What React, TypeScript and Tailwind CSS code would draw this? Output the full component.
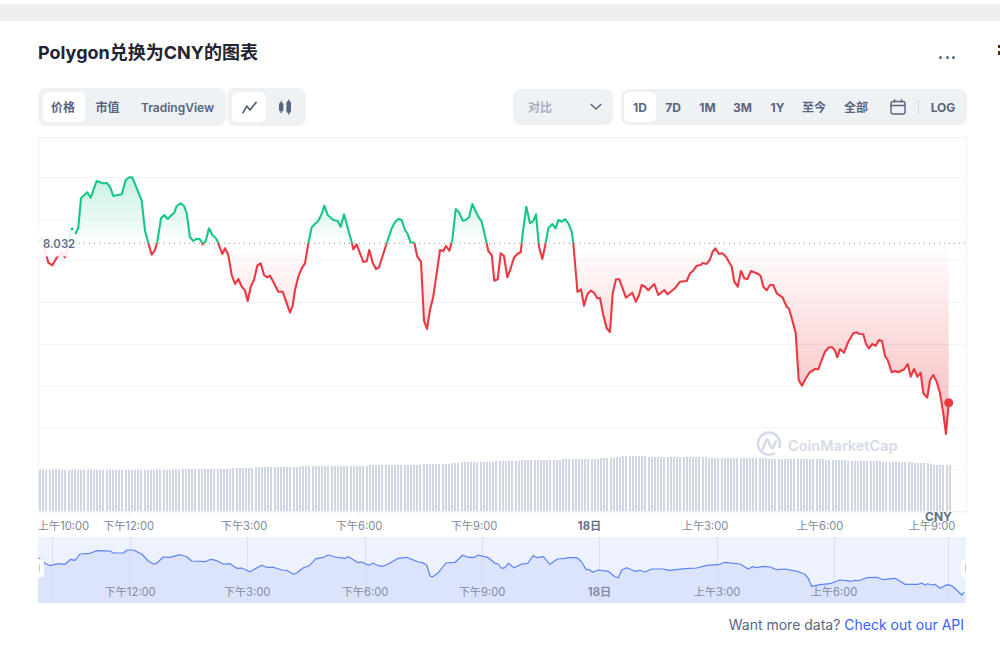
const linePts: [number, number][] = [
  [38, 243], [42, 237], [46.7, 256], [48.3, 262.7], [52.3, 265.3], [57.3, 256.7], [61.7, 252.7], [65, 257.3], [67.3, 250],
  [70.7, 231.7], [72, 228.3], [73.3, 231.7], [75.7, 233.3], [78.3, 227.7], [81, 198.3], [87.3, 192.3], [90.7, 197.7],
  [96.7, 181], [102.7, 183.3], [106.7, 183], [110, 186.7], [113.3, 196], [121.7, 194.3], [125.7, 180], [129.3, 177.3],
  [132.3, 177.3], [141.7, 200.7], [145, 230.7], [148.3, 243.3], [151.7, 254.7], [155, 250], [157.3, 241.7], [161, 218.3],
  [164.3, 215], [167.7, 219], [171.7, 215], [174.3, 212.7], [176.7, 206], [180.7, 203.3], [184, 206], [186.7, 213.3],
  [190, 237.3], [193.3, 241], [196.7, 238.7], [200, 239.3], [202.7, 244.3], [205.7, 241], [209, 228.3], [212.3, 235],
  [216, 238.3], [218.3, 243.3], [222.3, 254], [225, 248.3], [228.3, 255], [231.7, 275], [235, 284], [238.3, 279],
  [241.7, 286.7], [245, 290.7], [247.7, 301], [251, 286], [254, 280], [257.3, 265.7], [260.7, 263.3], [264, 275],
  [267.3, 277.3], [270, 275.7], [273.3, 281.7], [278.3, 291.7], [282.7, 291.7], [286.7, 303.3], [290, 312.5],
  [292.7, 305.7], [295, 290], [298.3, 276.7], [301.7, 268.3], [305, 263.3], [308.3, 243.3], [311.7, 227.3], [318.3, 220.7],
  [321.7, 214], [324.3, 205.7], [327.7, 215], [333.3, 220], [337.7, 221], [340.7, 226.7], [344, 214.3], [348.3, 230],
  [352, 243.3], [353.3, 249.3], [356.7, 244.3], [360, 253.3], [363.3, 262], [366.7, 261.3], [369.3, 250], [372.7, 262.7],
  [376, 269], [379, 267.3], [386.7, 243.3], [391.7, 228.3], [395, 222.3], [398.3, 219], [401.7, 220], [405, 230],
  [407.3, 233.3], [410.7, 242.3], [414.3, 242.7], [417.3, 256.7], [421, 261.7], [424, 320.7], [427, 329], [430, 310],
  [433.3, 296.7], [436.7, 273.3], [440, 250], [443.3, 251], [446, 246], [449.3, 250.7], [452.3, 240], [455.7, 209],
  [459, 212.3], [462.7, 220.7], [465.7, 220], [469, 217.3], [472.3, 204], [478.3, 216.7], [481.7, 221.7], [486.7, 243.3],
  [488.3, 251], [491.7, 255], [494.3, 280.7], [497.7, 279.3], [500.7, 253.3], [504, 256], [507.3, 277.3], [510.7, 268.3],
  [514, 257.7], [517.3, 254], [520.7, 252.3], [522.7, 233.3], [526.3, 206.7], [530, 223.3], [533.3, 221], [536, 214.3],
  [539, 246.7], [542.3, 259], [545.7, 243.3], [548.3, 228.3], [552.3, 224], [555.7, 228.3], [558.3, 220], [561.7, 221.7],
  [565, 219], [568.3, 223.3], [571.7, 231.7], [573.3, 243.3], [577.5, 292], [581, 289.3], [584, 305.7], [587.5, 294],
  [590.7, 290.7], [594, 292.7], [597.3, 298.3], [600, 298], [603.3, 315], [606.7, 328.3], [610, 332], [612.7, 293.3],
  [616, 279.3], [619.3, 279.3], [626, 297.7], [632.3, 292.7], [635.7, 301.7], [639, 295], [641.7, 285], [645, 286.7],
  [648.3, 290.3], [654.3, 284], [658.3, 295], [664.3, 290], [667.7, 294.3], [675, 288.3], [680, 281.7], [686.7, 281],
  [690, 273.3], [693.3, 270.7], [696.7, 265.7], [700.7, 265], [702.7, 263], [706.7, 264], [710, 259.3], [712.7, 251.7],
  [715.3, 248.3], [719, 254], [722.3, 253.3], [726, 256.7], [731.7, 266.7], [734.3, 281.7], [737.7, 286.7], [741, 271],
  [744.3, 278.3], [747.3, 279.3], [751, 271], [757.7, 273.7], [760.7, 276], [763.3, 286.7], [766.7, 290.3], [770, 285],
  [773.3, 285], [776.7, 293.3], [782.7, 297.7], [786.7, 306.7], [789, 308.7], [792.7, 321.7], [795.7, 333.3], [798.7, 380],
  [802, 385.7], [805, 380], [809.3, 372.7], [815, 369], [818.3, 369.3], [821.7, 360], [825, 351.7], [829, 347.3],
  [832.3, 347.3], [835, 350.7], [837.3, 357.3], [840, 349], [844, 352.7], [848.3, 341.7], [853.3, 333.3], [856.7, 332.3],
  [859.3, 334], [863.3, 334.3], [866, 344], [869, 348.3], [872.3, 344], [875.7, 345.7], [879, 340], [882, 341], [885, 356],
  [887.7, 360], [891.7, 372.3], [895, 371], [898.3, 372.3], [904.3, 369.3], [907.7, 364], [910.7, 376.7], [914, 369],
  [917.3, 376.7], [920.7, 372.7], [923.3, 393.3], [927.3, 397.7], [930, 380], [933.3, 375], [936.7, 381.7], [940, 393.3],
  [943.3, 413.3], [946, 434], [948.7, 402.7],
];

const navPts: [number, number][] = [
  [38, 558], [40, 559], [45, 563.3], [50, 565.7], [58.3, 563.7], [65, 564.3], [70.7, 559.3], [75, 560.3], [80, 554], [90, 553.3],
  [96.7, 550.7], [110, 551], [113.3, 553], [123.3, 553], [127.3, 550], [133.3, 550], [141.7, 554], [148.3, 561], [153.3, 564],
  [156.7, 563.3], [163.3, 557], [170, 557.3], [180, 554.7], [186.7, 556.7], [191.7, 561], [205, 561.7], [211, 559.3],
  [216.7, 560.7], [223.3, 564], [230, 563.7], [236.7, 568.3], [241.7, 568], [250, 571.7], [261.7, 565.3], [266.7, 567.3],
  [273.3, 567.3], [281.7, 570], [286.7, 570.3], [293.3, 574.3], [296.7, 573], [303.3, 567.7], [309.3, 565.7], [316, 558.7],
  [323.3, 557.3], [328.3, 555], [335, 557], [345, 558.3], [348.3, 556.7], [358.3, 562.7], [361.7, 562], [368.3, 565.3],
  [373.3, 563.3], [378.3, 565.7], [382.7, 566.3], [388.3, 564], [398.3, 558.3], [406.7, 557.3], [418.3, 562], [421.7, 562.3],
  [426.7, 565], [430, 575.7], [432.3, 577], [438.3, 572.7], [446, 563], [455, 562.3], [462.7, 555.3], [468.3, 557.3],
  [475, 557.3], [478.3, 555], [488.3, 557.7], [495, 563.3], [498.3, 564], [501.7, 568.3], [505, 567.7], [508.3, 563.3],
  [514, 567.7], [521.7, 564], [527.7, 563.3], [533.3, 555.7], [537.7, 557.7], [543.3, 556.7], [550, 564.3], [557.3, 559],
  [565, 558.3], [568.3, 557.7], [576.7, 557.7], [581, 561], [586, 569.3], [589.3, 569.7], [592.7, 572.3], [598.3, 570],
  [608.3, 571.3], [615, 576.7], [618.3, 577.7], [621.7, 570], [626.7, 567.7], [635, 571.3], [640, 570.3], [645, 572],
  [651.7, 569], [663.3, 569], [668.3, 570.3], [688.3, 568.3], [696.7, 568], [706.7, 565.3], [718.3, 564.7], [725, 562.3],
  [740, 564], [748.3, 569], [752.3, 566.7], [756.7, 567.7], [763.3, 566.3], [770, 567], [776.7, 569.7], [785, 569],
  [798.3, 571.7], [805, 574.3], [808.3, 578.3], [811.7, 586.3], [820, 584.7], [830, 583.7], [840, 580], [846.7, 580.7],
  [851.7, 581.3], [855, 580.3], [858.3, 580.7], [866.7, 577.7], [876.7, 577.3], [883.3, 579.7], [895, 578.3], [905, 584.3],
  [918.3, 584.3], [921.7, 583], [925, 585], [927.7, 583.7], [931.7, 585], [935, 584.3], [940, 588.3], [946.7, 584.7],
  [951.7, 585.7], [956.7, 590], [961.7, 595], [964.3, 592.3],
];

const volProfile: [number, number][] = [
  [39, 470], [180, 470], [183, 469], [228, 469], [231, 468], [252, 468], [255, 467], [300, 466.5], [360, 466], [372, 465],
  [420, 464.5], [445, 464], [460, 462.5], [490, 462], [500, 461], [520, 460.5], [560, 459.5], [600, 458.5], [615, 457.5],
  [622, 456.5], [640, 456], [650, 457], [700, 457], [712, 458], [760, 458], [772, 459], [820, 459], [830, 460], [860, 461],
  [900, 462], [925, 463], [934, 465], [951, 465],
];

const BASE = 243.3;
const toPath = (pts: [number, number][]) => pts.map(([x, y], i) => `${i ? "L" : "M"}${x} ${y}`).join(" ");

function volTop(x: number) {
  for (let i = 1; i < volProfile.length; i++) {
    const [x0, y0] = volProfile[i - 1];
    const [x1, y1] = volProfile[i];
    if (x <= x1) return y0 + ((y1 - y0) * (x - x0)) / (x1 - x0);
  }
  return 465;
}

const volBars = Array.from({ length: 288 }, (_, i) => {
  const x = 39 + i * 3.17;
  return { x: Math.round(x), y: Math.round(volTop(x)) };
});

const gridYs = [177.5, 219.5, 260.5, 302.5, 344.5, 386.5, 427.5, 469.5];
const tickXs = [51, 128, 244, 359, 474, 590, 705, 820, 935];

const axisLabels = [
  { x: 63.5, t: "上午10:00" },
  { x: 128.5, t: "下午12:00" },
  { x: 244, t: "下午3:00" },
  { x: 359, t: "下午6:00" },
  { x: 474, t: "下午9:00" },
  { x: 589.5, t: "18日", bold: true },
  { x: 705, t: "上午3:00" },
  { x: 820, t: "上午6:00" },
  { x: 932, t: "上午9:00" },
];

const navLabels = [
  { x: 130, t: "下午12:00" },
  { x: 247, t: "下午3:00" },
  { x: 365, t: "下午6:00" },
  { x: 482, t: "下午9:00" },
  { x: 599.5, t: "18日", bold: true },
  { x: 717, t: "上午3:00" },
  { x: 834, t: "上午6:00" },
];

const navGridXs = [52, 130, 247, 365, 482, 599, 717, 834, 948];

const ranges = [
  { label: "7D", w: "w-[34px]" },
  { label: "1M", w: "w-[35px]" },
  { label: "3M", w: "w-[35px]" },
  { label: "1Y", w: "w-[35px]" },
  { label: "至今", w: "w-[38px]" },
  { label: "全部", w: "w-[46px]" },
];

function PriceChart() {
  const line = toPath(linePts);
  const area = `${line} L948.7 ${BASE} L38 ${BASE} Z`;
  return (
    <svg className="block w-[932px] h-[400px] mt-[11px]" viewBox="38 137 932 400">
      <defs>
        <linearGradient id="upFill" gradientUnits="userSpaceOnUse" x1="0" y1="177" x2="0" y2="243">
          <stop offset="0" stopColor="#16c784" stopOpacity="0.24" />
          <stop offset="1" stopColor="#16c784" stopOpacity="0.01" />
        </linearGradient>
        <linearGradient id="downFill" gradientUnits="userSpaceOnUse" x1="0" y1="243" x2="0" y2="434">
          <stop offset="0" stopColor="#ea3943" stopOpacity="0" />
          <stop offset="1" stopColor="#ea3943" stopOpacity="0.36" />
        </linearGradient>
        <clipPath id="above">
          <rect x="38" y="137" width="932" height={BASE - 137} />
        </clipPath>
        <clipPath id="below">
          <rect x="38" y={BASE} width="932" height="300" />
        </clipPath>
      </defs>

      {gridYs.map(y => (
        <line key={y} x1="38" x2="967" y1={y} y2={y} stroke="#f3f5f8" strokeWidth="1" />
      ))}
      <path d="M38.5 512 V137.5 H966.5 V512" fill="none" stroke="#eff2f5" strokeWidth="1" />

      <g clipPath="url(#above)">
        <path d={area} fill="url(#upFill)" />
      </g>
      <g clipPath="url(#below)">
        <path d={area} fill="url(#downFill)" />
      </g>

      <line x1="74" x2="967" y1={BASE} y2={BASE} stroke="#8a93a6" strokeWidth="1" strokeDasharray="1 4" />

      <g clipPath="url(#above)">
        <path d={line} fill="none" stroke="#16c784" strokeWidth="2.1" strokeLinejoin="round" />
      </g>
      <g clipPath="url(#below)">
        <path d={line} fill="none" stroke="#ea3943" strokeWidth="2.1" strokeLinejoin="round" />
      </g>
      <circle cx="948.7" cy="402.7" r="4.5" fill="#ea3943" />

      <rect x="38" y="230" width="37" height="26.5" fill="#ffffff" fillOpacity="0.88" />
      <text x="43" y="247.5" fontSize="11.4" fontWeight="600" fill="#616e85">8.032</text>

      <g stroke="#d5dbe7" strokeWidth="2.6" fill="none" strokeLinecap="round" strokeLinejoin="round">
        <path d="M779.4 447 A11 11 0 1 0 774 453.4" />
        <path d="M762.5 449.5 L766 440.5 Q767.2 438.5 768.3 440.5 L770.8 447 Q772 449 773.2 447 L775.8 441.5" />
      </g>
      <text x="788" y="451" fontSize="14.5" fontWeight="600" fill="#d5dbe7">CoinMarketCap</text>

      {volBars.map(b => (
        <rect key={b.x} x={b.x} y={b.y} width="2" height={511 - b.y} fill="#cfd6e4" />
      ))}
      <rect x="38" y="511" width="929" height="1.5" fill="#eff2f5" />
      {tickXs.map(x => (
        <rect key={x} x={x} y="512" width="1" height="3" fill="#eff2f5" />
      ))}

      {axisLabels.map(l => (
        <text
          key={l.t}
          x={l.x}
          y="530"
          fontSize="11.2"
          textAnchor="middle"
          fontWeight={l.bold ? 700 : 400}
          fill={l.bold ? "#616e85" : "#808a9d"}
        >
          {l.t}
        </text>
      ))}
      <text x="925" y="521" fontSize="12" fontWeight="700" fill="#616e85">CNY</text>
    </svg>
  );
}

function Navigator() {
  const line = toPath(navPts);
  return (
    <svg className="block w-[929px] h-[66px]" viewBox="38 537 929 66">
      <rect x="38" y="537" width="928" height="66" fill="#eef2fe" />
      <path d={`${line} L964.3 603 L38 603 Z`} fill="#dbe3fd" />
      {navGridXs.map(x => (
        <line key={x} x1={x + 0.5} x2={x + 0.5} y1="537" y2="603" stroke="#d8dff5" strokeWidth="1" />
      ))}
      <path d={line} fill="none" stroke="#5b82f7" strokeWidth="1.2" strokeLinejoin="round" />
      {navLabels.map(l => (
        <text
          key={l.t}
          x={l.x}
          y="596"
          fontSize="11.2"
          textAnchor="middle"
          fontWeight={l.bold ? 700 : 400}
          fill="#858ca2"
        >
          {l.t}
        </text>
      ))}
      <rect x="32" y="559" width="12" height="18.5" rx="4" fill="#ffffff" />
      <rect x="39" y="564" width="1" height="8" fill="#c3cad8" />
      <rect x="961" y="559" width="12" height="18.5" rx="4" fill="#ffffff" />
      <rect x="965" y="564" width="1" height="8" fill="#c3cad8" />
    </svg>
  );
}

export default function App() {
  return (
    <div className="relative w-[1000px] h-[650px] overflow-hidden bg-white pt-1 text-[#58667e] [font-family:Inter,'Noto_Sans_CJK_SC',sans-serif]">
      <div className="h-[17px] bg-[#efefef]" />

      <div className="absolute right-0 top-[45px] flex w-[2px] flex-col gap-[3px]">
        <span className="h-[3px] bg-[#4a2c0a]" />
        <span className="h-1 bg-[#4a2c0a]" />
      </div>

      <div className="pl-[38px]">
        <div className="mt-[18px] flex h-7 w-[917px] items-center justify-between">
          <h2 className="text-lg font-bold text-[#222531]">Polygon兑换为CNY的图表</h2>
          <div className="mt-2 flex gap-[3.5px]">
            <span className="h-[3px] w-[3px] rounded-full bg-[#58667e]" />
            <span className="h-[3px] w-[3px] rounded-full bg-[#58667e]" />
            <span className="h-[3px] w-[3px] rounded-full bg-[#58667e]" />
          </div>
        </div>

        <div className="mt-[21px] flex h-[38px] w-[929px] items-center justify-between text-xs font-semibold">
          <div className="flex">
            <div className="flex h-[38px] items-center rounded-lg bg-[#eff2f5] pl-[5px] pr-px">
              <button className="h-[30px] w-[42px] rounded-md bg-white pr-0.5 pt-0.5">价格</button>
              <button className="h-[30px] w-[45px] pt-0.5">市值</button>
              <button className="h-[30px] w-[95px] pt-0.5">TradingView</button>
            </div>
            <div className="ml-px flex h-[38px] items-center rounded-lg bg-[#eff2f5] pl-[5px] pr-0.5">
              <button className="flex h-[30px] w-[34px] items-center justify-center rounded-md bg-white">
                <svg width="15" height="13" viewBox="0 0 16 13" fill="none" stroke="#58667e" strokeWidth="1.9" strokeLinejoin="round" strokeLinecap="round">
                  <path d="M1 12 L5.2 5 L8.5 9.2 L15 1" />
                </svg>
              </button>
              <button className="flex h-[30px] w-[38px] items-center justify-center">
                <svg width="14" height="16" viewBox="0 0 14 16" fill="#58667e">
                  <rect x="1" y="3.5" width="4.4" height="9" rx="2" />
                  <rect x="2.6" y="1.8" width="1.2" height="12.4" />
                  <rect x="8.4" y="2" width="4.6" height="12" rx="2" />
                  <rect x="10.1" y="0.5" width="1.2" height="15" />
                </svg>
              </button>
            </div>
          </div>

          <div className="flex items-center gap-2">
            <div className="flex h-9 w-[100px] items-center justify-between rounded-lg bg-[#eff2f5] pl-[15px] pr-[11px]">
              <span className="pt-0.5 text-[#a6b0c3]">对比</span>
              <svg width="12" height="8" viewBox="0 0 12 8" fill="none" stroke="#58667e" strokeWidth="1.5" strokeLinecap="round" strokeLinejoin="round">
                <path d="M1.2 1.5 L6 6 L10.8 1.5" />
              </svg>
            </div>
            <div className="flex h-9 w-[346px] items-center rounded-lg bg-[#eff2f5] pl-[3px] font-bold">
              <button className="h-[30px] w-8 rounded-md bg-white pt-0.5">1D</button>
              {ranges.map(r => (
                <button key={r.label} className={`h-[30px] pt-0.5 ${r.w}`}>
                  {r.label}
                </button>
              ))}
              <button className="flex h-[30px] w-[36px] items-center justify-center pl-px">
                <svg width="16" height="16" viewBox="0 0 16 16" fill="none" stroke="#58667e" strokeWidth="1.4" strokeLinecap="round">
                  <rect x="1" y="2.5" width="14" height="12.5" rx="2" />
                  <path d="M1 6.5 H15 M4.5 0.8 V3 M11.5 0.8 V3" />
                </svg>
              </button>
              <span className="ml-[3px] h-3.5 w-px bg-[#cfd6e4]" />
              <button className="h-[30px] w-12 pt-0.5">LOG</button>
            </div>
          </div>
        </div>

        <PriceChart />
        <Navigator />

        <p className="mt-3 w-[926px] text-right text-sm leading-5">
          Want more data? <a className="text-[#3861fb]">Check out our API</a>
        </p>
      </div>
    </div>
  );
}
